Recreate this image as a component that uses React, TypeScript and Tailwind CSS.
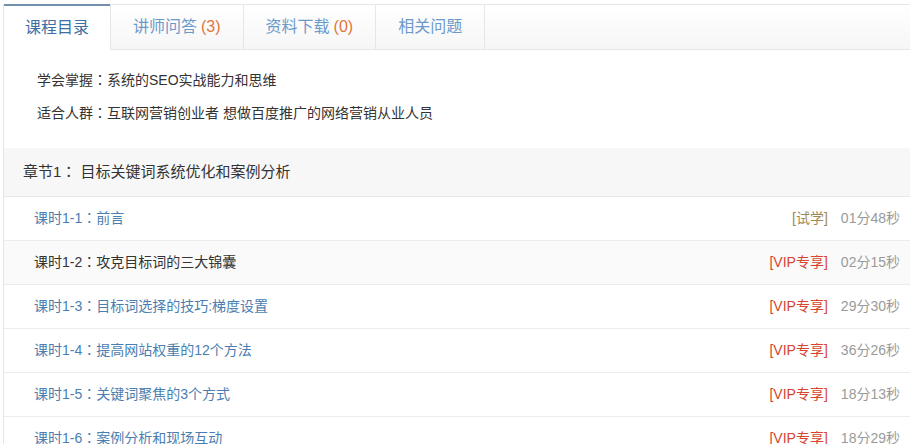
import React from "react";

const font = { fontFamily: '"Liberation Sans", "Noto Sans CJK SC", sans-serif' };

type Lesson = { no: string; title: string; tag: "try" | "vip"; time: string; hover?: boolean };

const lessons: Lesson[] = [
  { no: "1-1", title: "前言", tag: "try", time: "01分48秒" },
  { no: "1-2", title: "攻克目标词的三大锦囊", tag: "vip", time: "02分15秒", hover: true },
  { no: "1-3", title: "目标词选择的技巧:梯度设置", tag: "vip", time: "29分30秒" },
  { no: "1-4", title: "提高网站权重的12个方法", tag: "vip", time: "36分26秒" },
  { no: "1-5", title: "关键词聚焦的3个方式", tag: "vip", time: "18分13秒" },
  { no: "1-6", title: "案例分析和现场互动", tag: "vip", time: "18分29秒" },
];

// full-width colon, centred like the reference font
function Colon() {
  return <span className="font-['Noto_Sans_CJK_TC'] leading-[0]">：</span>;
}

function Tabs() {
  return (
    <div className="flex h-[46px] bg-gradient-to-b from-white to-[#f6f6f6] border-t border-[#e6e6e6]">
      <div className="-mt-px flex items-center px-[21px] bg-white border-t-2 border-[#7290ae] text-[16px] text-[#3d6fa3]">
        课程目录
      </div>
      <div className="flex items-center px-[22px] border-l border-r border-b border-[#e6e6e6] text-[16px] text-[#6b9aca]">
        讲师问答 <span className="ml-1 text-[#e2743c]">(3)</span>
      </div>
      <div className="flex items-center px-[22px] border-r border-b border-[#e6e6e6] text-[16px] text-[#6b9aca]">
        资料下载 <span className="ml-1 text-[#e2743c]">(0)</span>
      </div>
      <div className="flex items-center px-[22px] border-r border-b border-[#e6e6e6] text-[16px] text-[#6b9aca]">
        相关问题
      </div>
      <div className="flex-1 border-b border-[#e6e6e6]" />
    </div>
  );
}

function LessonRow({ l }: { l: Lesson }) {
  return (
    <div
      className={`flex items-center h-[44px] pl-[30px] pr-[10px] border-b border-[#ececec] text-[14px] ${
        l.hover ? "bg-[#fafafa]" : "bg-white"
      }`}
    >
      <span className={`flex-1 ${l.hover ? "text-[#333333]" : "text-[#4b7eb0]"}`}>
        课时{l.no}
        <Colon />
        {l.title}
      </span>
      {l.tag === "try" ? (
        <span className="text-[#9c8a55]">[试学]</span>
      ) : (
        <span className="text-[#d6452f]">[VIP专享]</span>
      )}
      <span className="ml-[13px] text-[#9a9a9a]">{l.time}</span>
    </div>
  );
}

export default function App() {
  return (
    <div className="w-[910px] h-[444px] overflow-hidden bg-white pt-[4px] pl-[3px]" style={font}>
      <div className="border-l border-[#e6e6e6] h-full">
        <Tabs />
        <div className="pt-[14px] pb-[18px] pl-[33px] text-[14px] text-[#333333] leading-[33px]">
          <p>
            学会掌握
            <Colon />
            系统的SEO实战能力和思维
          </p>
          <p>
            适合人群
            <Colon />
            互联网营销创业者 想做百度推广的网络营销从业人员
          </p>
        </div>
        <div className="flex items-center h-[49px] pl-[19px] bg-[#f7f7f7] border-b border-[#e8e8e8] text-[15px] text-[#333333]">
          <span>
            章节1
            <Colon />
            &nbsp;目标关键词系统优化和案例分析
          </span>
        </div>
        {lessons.map((l) => (
          <LessonRow key={l.no} l={l} />
        ))}
      </div>
    </div>
  );
}
